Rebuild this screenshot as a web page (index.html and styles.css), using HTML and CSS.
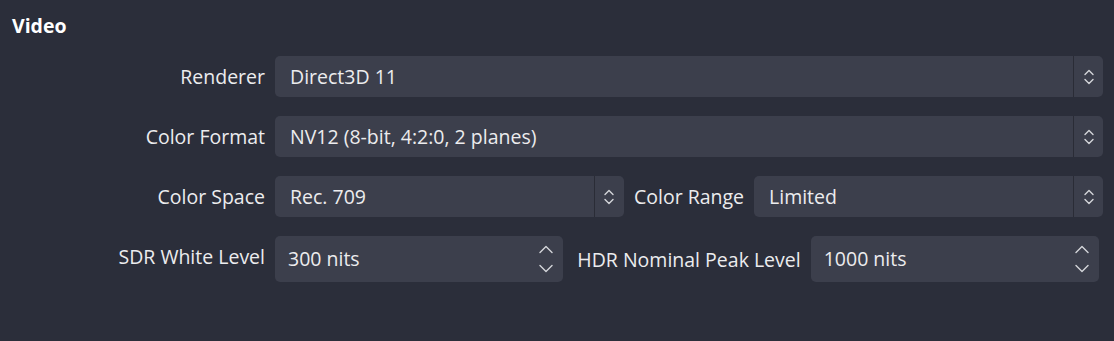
FILE: index.html
```html
<!DOCTYPE html>
<html lang="en">
<head>
    <meta charset="utf-8">
    <title>Video Settings</title>
    <link rel="stylesheet" href="styles.css">
</head>
<body>
    <div class="group">
        <h2 class="group-title">Video</h2>

        <div class="form">
            <label class="form-label">Renderer</label>
            <div class="combo">
                <span class="combo-value">Direct3D 11</span>
                <span class="combo-arrow">
                    <svg width="10" height="16" viewBox="0 0 10 16"><path d="M1 5.5 L5 1.5 L9 5.5 M1 10.5 L5 14.5 L9 10.5"/></svg>
                </span>
            </div>

            <label class="form-label">Color Format</label>
            <div class="combo">
                <span class="combo-value">NV12 (8-bit, 4:2:0, 2 planes)</span>
                <span class="combo-arrow">
                    <svg width="10" height="16" viewBox="0 0 10 16"><path d="M1 5.5 L5 1.5 L9 5.5 M1 10.5 L5 14.5 L9 10.5"/></svg>
                </span>
            </div>

            <label class="form-label">Color Space</label>
            <div class="row">
                <div class="combo">
                    <span class="combo-value">Rec. 709</span>
                    <span class="combo-arrow">
                        <svg width="10" height="16" viewBox="0 0 10 16"><path d="M1 5.5 L5 1.5 L9 5.5 M1 10.5 L5 14.5 L9 10.5"/></svg>
                    </span>
                </div>
                <label class="inline-label">Color Range</label>
                <div class="combo">
                    <span class="combo-value">Limited</span>
                    <span class="combo-arrow">
                        <svg width="10" height="16" viewBox="0 0 10 16"><path d="M1 5.5 L5 1.5 L9 5.5 M1 10.5 L5 14.5 L9 10.5"/></svg>
                    </span>
                </div>
            </div>

            <label class="form-label">SDR White Level</label>
            <div class="row row-spin">
                <div class="spin">
                    <span class="spin-value">300 nits</span>
                    <span class="spin-arrows">
                        <svg width="14" height="28" viewBox="0 0 14 28"><path d="M1 7.5 L7 1.5 L13 7.5 M1 20.5 L7 26.5 L13 20.5"/></svg>
                    </span>
                </div>
                <label class="inline-label spin-label">HDR Nominal Peak Level</label>
                <div class="spin">
                    <span class="spin-value">1000 nits</span>
                    <span class="spin-arrows">
                        <svg width="14" height="28" viewBox="0 0 14 28"><path d="M1 7.5 L7 1.5 L13 7.5 M1 20.5 L7 26.5 L13 20.5"/></svg>
                    </span>
                </div>
            </div>
        </div>
    </div>
</body>
</html>
```

FILE: styles.css
```css
:root {
    --bg-color: #2b2e3a;
    --field-color: #3c3f4c;
    --divider-color: #2a2c36;
    --text-color: #ececee;
    --arrow-color: #d4d5da;
}

* {
    box-sizing: border-box;
    margin: 0;
    padding: 0;
}

html, body {
    height: 100%;
}

body {
    font-family: 'Open Sans', 'Noto Sans', sans-serif;
    font-size: 19.5px;
    color: var(--text-color);
    background: var(--bg-color);
}

.group {
    padding: 13px 11px 0 12px;
}

.group-title {
    font-size: 19.5px;
    font-weight: 700;
    line-height: 26px;
    color: #ffffff;
    margin-bottom: 17px;
}

.form {
    display: grid;
    grid-template-columns: 253px 1fr;
    column-gap: 10px;
    row-gap: 19px;
}

.form-label {
    text-align: right;
    line-height: 41px;
    height: 41px;
    white-space: nowrap;
}

.row {
    display: flex;
    align-items: center;
    gap: 10px;
}

.row-spin {
    margin-right: 4px;
}

.inline-label {
    white-space: nowrap;
}

.spin-label {
    margin-left: 4px;
}

/* combobox */
.combo {
    flex: 1;
    display: flex;
    height: 41px;
    background: var(--field-color);
    border-radius: 5px;
}

.combo-value {
    flex: 1;
    padding-left: 15px;
    line-height: 41px;
    white-space: nowrap;
}

.combo-arrow {
    width: 30px;
    border-left: 1px solid var(--divider-color);
    display: flex;
    align-items: center;
    justify-content: center;
}

.combo-arrow svg path,
.spin-arrows svg path {
    fill: none;
    stroke: var(--arrow-color);
    stroke-width: 1.4;
    stroke-linecap: round;
    stroke-linejoin: round;
}

/* spinbox */
.spin {
    flex: 1;
    display: flex;
    height: 46px;
    background: var(--field-color);
    border-radius: 5px;
}

.spin-value {
    flex: 1;
    padding-left: 13px;
    line-height: 46px;
}

.spin-arrows {
    width: 34px;
    display: flex;
    align-items: center;
    justify-content: center;
}
```
